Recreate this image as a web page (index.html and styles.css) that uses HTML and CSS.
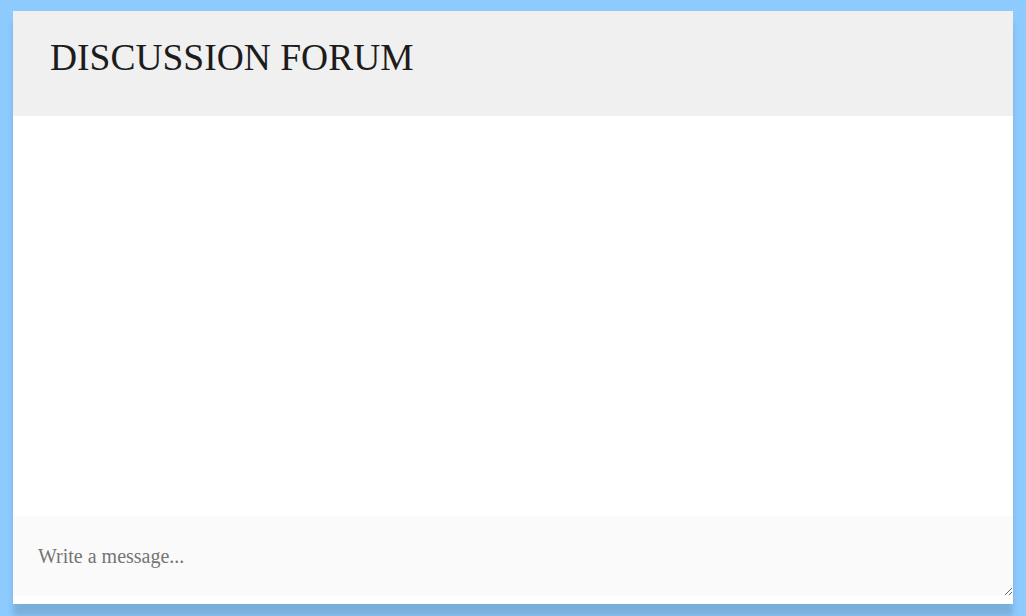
FILE: index.html
```html
<!DOCTYPE html>
<html>
<head>
<meta charset="utf-8">
<link rel="stylesheet" href="styles.css">
</head>
<body>
<div class="card">
  <header class="header"><h1 class="title">DISCUSSION FORUM</h1></header>
  <main class="messages"></main>
  <textarea class="composer" placeholder="Write a message..."></textarea>
</div>
</body>
</html>
```
FILE: styles.css
```css
html {
  margin: 0;
  padding: 0;
  background: #8dcbff;
}
body {
  margin: 0;
  padding: 11px 0 12px;
  font-family: "Liberation Serif", "Times New Roman", serif;
}
.card {
  width: 1000px;
  margin: 0 auto;
  background: #ffffff;
  box-shadow: 0 12px 6px rgba(0, 0, 0, 0.14);
  display: flex;
  flex-direction: column;
  padding-bottom: 8px;
}
.header {
  box-sizing: border-box;
  background: #f0f0f0;
  height: 105px;
  padding: 0 37px 12px;
  display: flex;
  align-items: center;
}
.title {
  margin: 0;
  font-weight: normal;
  font-size: 37.5px;
  color: #1c1c1c;
}
.messages {
  height: 400px;
}
.composer {
  display: block;
  box-sizing: border-box;
  width: 1000px;
  height: 80px;
  margin: 0;
  border: none;
  outline: none;
  background: #fafafa;
  padding: 29px 25px 0;
  font-family: "Liberation Serif", "Times New Roman", serif;
  font-size: 20px;
  color: #333;
}
.composer::placeholder {
  color: #757575;
}
```
